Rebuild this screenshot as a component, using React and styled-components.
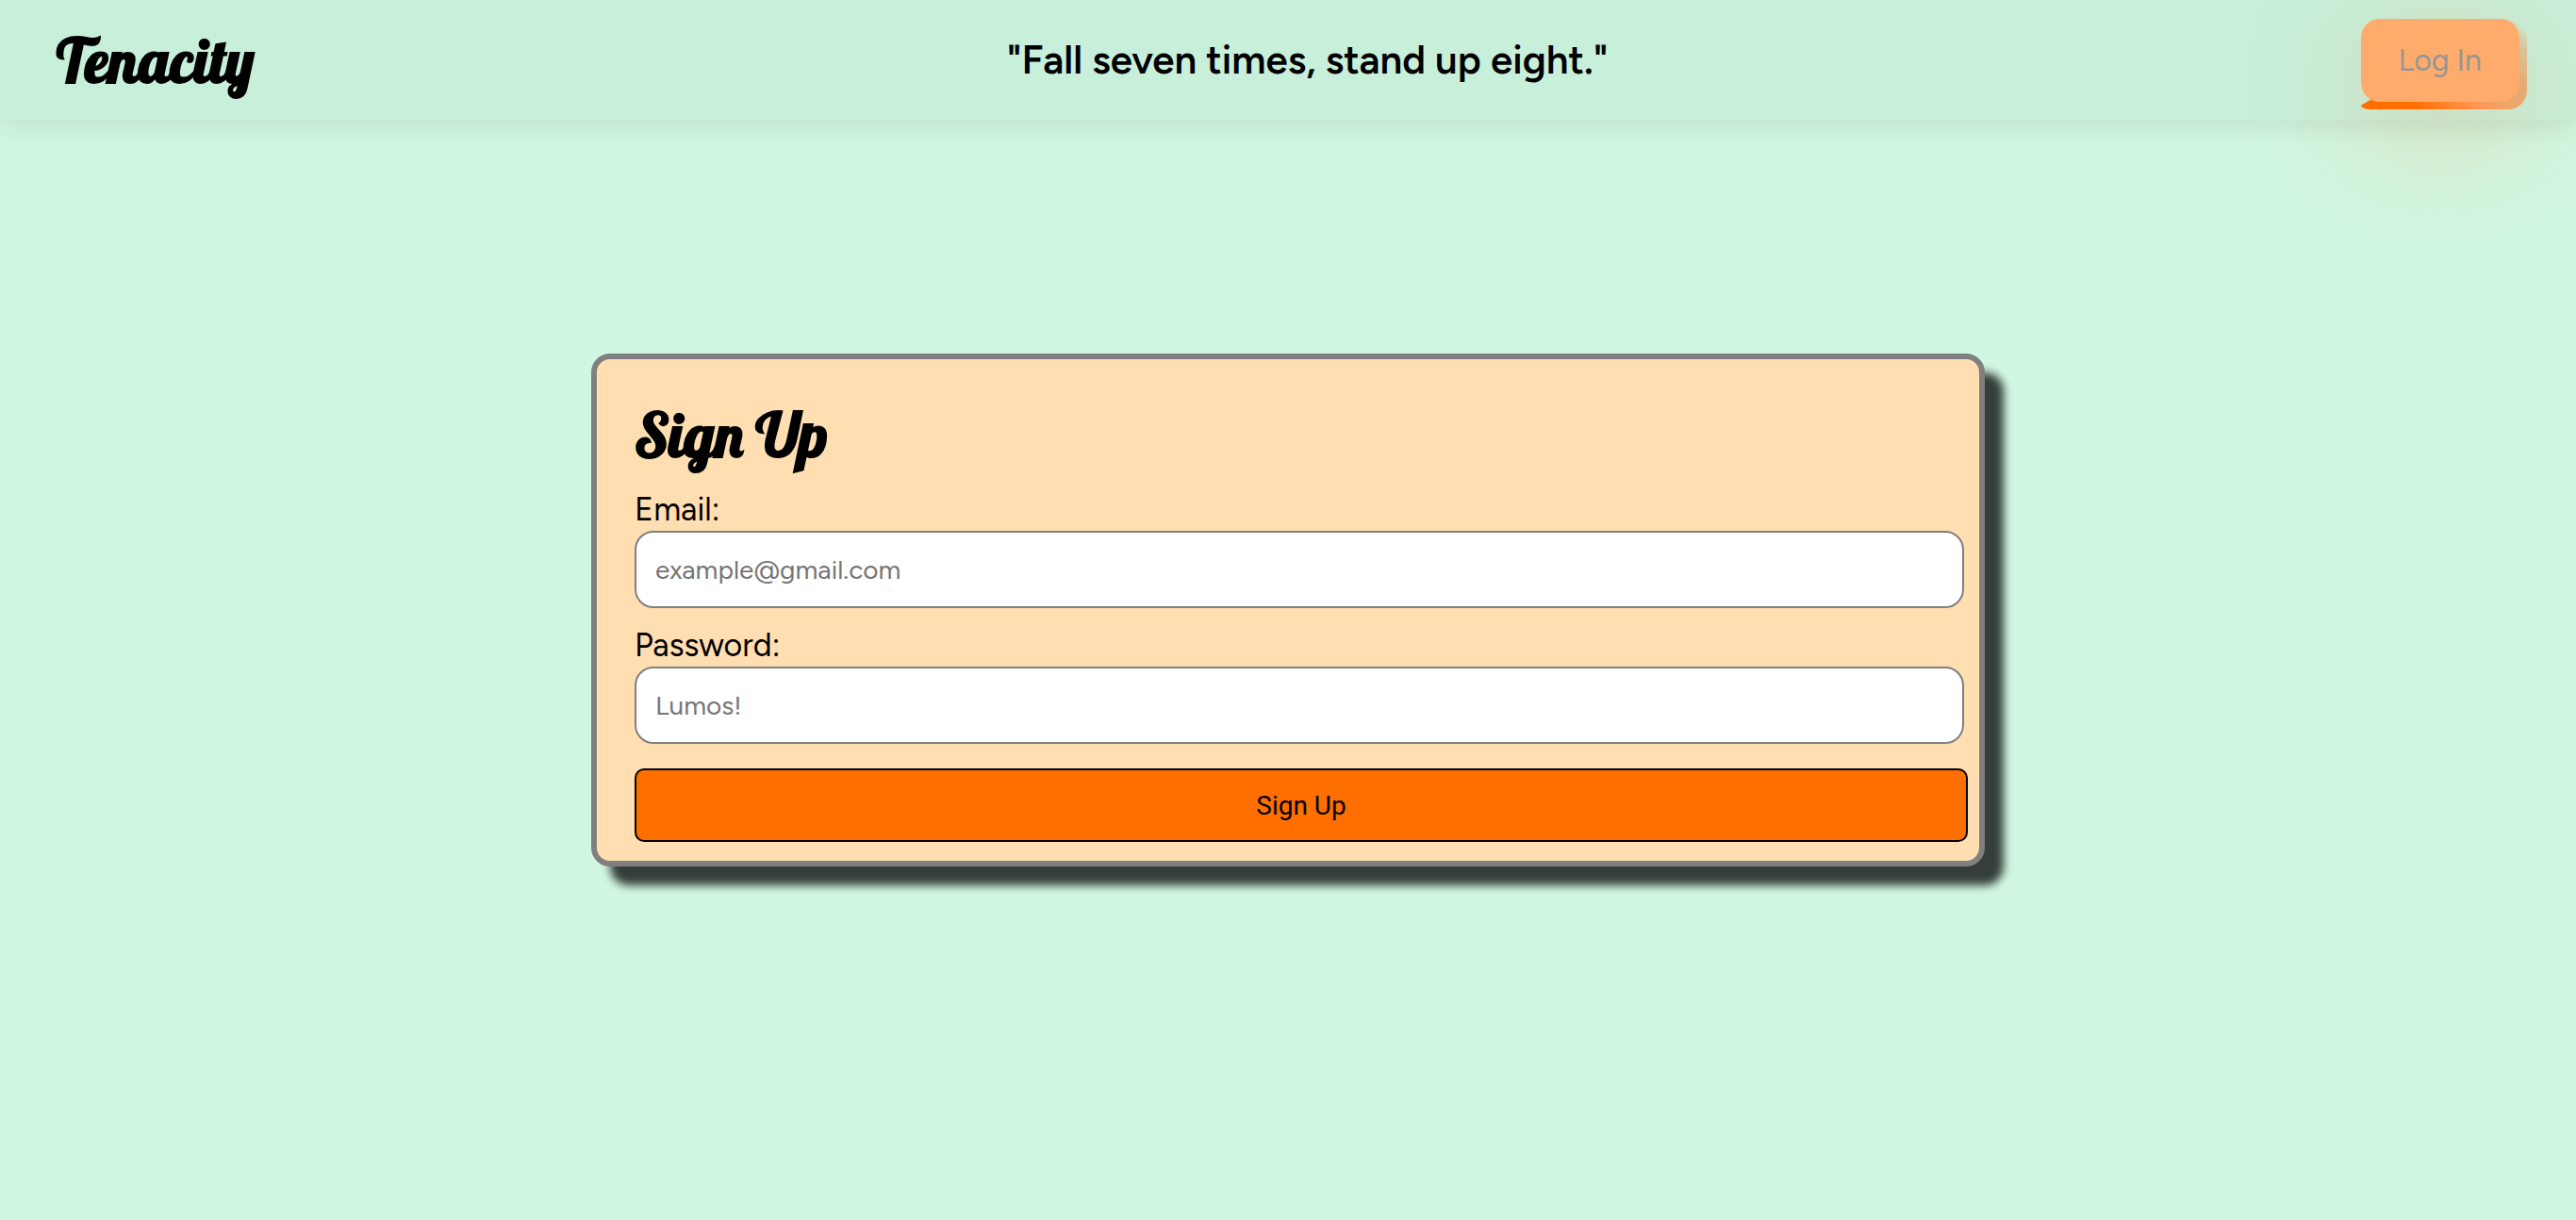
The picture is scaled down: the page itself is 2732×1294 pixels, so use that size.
import styled, { createGlobalStyle } from 'styled-components'

const GlobalStyle = createGlobalStyle`
  * {
    box-sizing: border-box;
  }

  body {
    margin: 0;
    background-color: #d1f7e2;
    color: #000;
    font-family: Figtree, Roboto, 'Liberation Sans', sans-serif;
    font-size: 32px;
    line-height: 40px;
  }
`

const Page = styled.div`
  display: flex;
  flex-direction: column;
  min-height: 100vh;
  overflow-x: hidden;
`

const Header = styled.header`
  display: flex;
  align-items: center;
  justify-content: space-between;
  height: 128px;
  padding: 0 60px;
  background-color: #c8efda;
  box-shadow: 0 8px 24px rgba(0, 0, 0, 0.08);
`

const Brand = styled.h1`
  margin: 0;
  font-family: Lobster, 'Liberation Serif', serif;
  font-size: 64px;
  font-weight: 700;
  line-height: 80px;
`

const Quote = styled.p`
  margin: 0;
  font-size: 42px;
  font-weight: 600;
`

const LoginWrap = styled.div`
  position: relative;
  border-radius: 20px;
  box-shadow: 0 30px 130px rgba(255, 111, 0, 0.25);

  /* the lip that sticks out below and to the right of the button */
  &::before {
    content: '';
    position: absolute;
    inset: 0 -8px -8px 0;
    border-radius: 20px 20px 20px 10px / 20px 20px 20px 4px;
    background: linear-gradient(
      35deg,
      #ff6f00 20%,
      #ff934a 39%,
      #eea566 50%,
      #e5ac78 67%,
      #d8c598 85%,
      #c9ead3 96%
    );
    clip-path: polygon(0 92px, 12px 85px, 20px 20px, 100% 0, 100% 100%, 0 100%);
  }
`

const LoginButton = styled.button`
  position: relative;
  display: block;
  height: 88px;
  padding: 0 40px;
  border: none;
  border-radius: 20px;
  background-color: #ffab6b;
  color: #969696;
  font: inherit;
`

const Main = styled.main`
  display: flex;
  flex: 1;
  align-items: center;
  justify-content: center;
  padding-bottom: 128px;
`

const Form = styled.form`
  display: flex;
  flex-direction: column;
  width: calc(50% + 112px);
  padding: 40px 12px 20px 40px;
  border: 6px solid #808080;
  border-radius: 20px;
  background-color: #ffdfb2;
  box-shadow: 20px 20px 10px rgba(0, 0, 0, 0.75);
`

const FormTitle = styled(Brand).attrs({ as: 'h2' })`
  margin-bottom: 26px;
`

const Field = styled.div`
  display: flex;
  flex-direction: column;
  margin: 0 4px 26px 0;
`

const Label = styled.label`
  padding-bottom: 8px;
  font-size: 34px;
  line-height: 28px;
`

const Input = styled.input`
  height: 82px;
  padding: 0 20px;
  border: 2px solid #808080;
  border-radius: 20px;
  background-color: #fff;
  font: inherit;
  font-size: 28px;

  &::placeholder {
    color: #757575;
  }
`

const SubmitButton = styled.button`
  height: 78px;
  border: 2px solid #000;
  border-radius: 10px;
  background-color: #ff6f00;
  color: #000;
  font-family: Roboto, 'Liberation Sans', sans-serif;
  font-size: 28px;
`

function App() {
  return (
    <Page>
      <GlobalStyle />
      <Header>
        <Brand>Tenacity</Brand>
        <Quote>"Fall seven times, stand up eight."</Quote>
        <LoginWrap>
          <LoginButton type="button">Log In</LoginButton>
        </LoginWrap>
      </Header>
      <Main>
        <Form>
          <FormTitle>Sign Up</FormTitle>
          <Field>
            <Label htmlFor="email">Email:</Label>
            <Input id="email" type="email" placeholder="example@gmail.com" />
          </Field>
          <Field>
            <Label htmlFor="password">Password:</Label>
            <Input id="password" type="password" placeholder="Lumos!" />
          </Field>
          <SubmitButton type="submit">Sign Up</SubmitButton>
        </Form>
      </Main>
    </Page>
  )
}

export default App
